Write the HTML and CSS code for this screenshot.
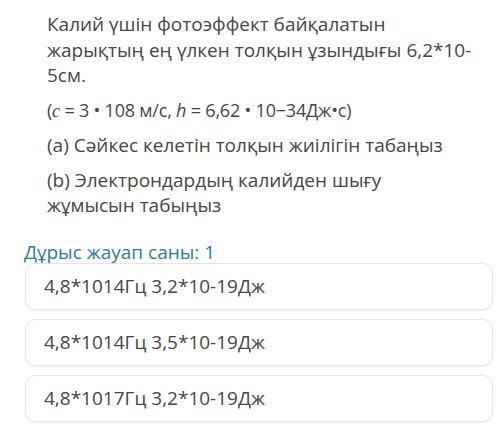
FILE: index.html
```html
<!DOCTYPE html>
<html>
<head>
<meta charset="utf-8">
<link rel="stylesheet" href="styles.css">
</head>
<body>
<div class="page">
  <div class="question">
    <p>Калий үшін фотоэффект байқалатын<br>жарықтың ең үлкен толқын ұзындығы 6,2*10-<br>5см.</p>
    <p class="consts">(<i class="sym">c</i> = 3 • 108 м/с, <i>h</i> = 6,62 • 10−34Дж•с)</p>
    <p>(a) Сәйкес келетін толқын жиілігін табаңыз</p>
    <p>(b) Электрондардың калийден шығу<br>жұмысын табыңыз</p>
  </div>
  <div class="count">Дұрыс жауап саны: 1</div>
  <div class="options">
    <div class="option">4,8*1014Гц 3,2*10-19Дж</div>
    <div class="option">4,8*1014Гц 3,5*10-19Дж</div>
    <div class="option">4,8*1017Гц 3,2*10-19Дж</div>
  </div>
</div>
</body>
</html>
```
FILE: styles.css
```css
html, body {
  margin: 0;
  padding: 0;
  background: #ffffff;
}
body {
  font-family: "Open Sans", "Noto Sans", sans-serif;
  color: #464646;
  width: 500px;
  height: 436px;
  overflow: hidden;
}
.page {
  padding: 12px 7px 0 25px;
}
.question {
  padding-left: 22px;
  font-size: 19px;
  line-height: 25.5px;
}
.question p {
  margin: 0 0 9px 0;
}
.question .consts {
  font-size: 18px;
  letter-spacing: -0.2px;
}
.question .sym {
  font-family: "Liberation Serif", serif;
}
.count {
  color: #2b7c9c;
  font-size: 19px;
  line-height: 22px;
  margin-top: 22px;
  margin-left: -1px;
}
.options {
  display: flex;
  flex-direction: column;
  gap: 9px;
}
.option {
  height: 45px;
  border: 1px solid #e4e4e4;
  border-radius: 10px;
  box-shadow: 0 1px 2px rgba(0,0,0,0.06);
  padding-left: 18px;
  display: flex;
  align-items: center;
  font-size: 19px;
  color: #464646;
}
```
